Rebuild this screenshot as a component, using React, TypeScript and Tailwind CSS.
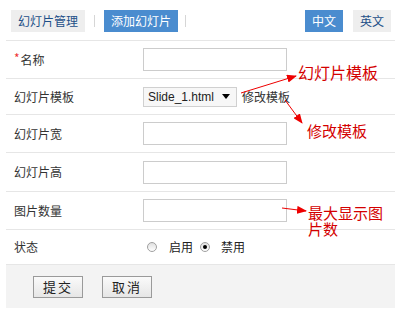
import React from "react";

const font = { fontFamily: '"Noto Sans CJK SC", "Liberation Sans", sans-serif' };

function Row({ h, label, children, star }: { h: string; label: string; children?: React.ReactNode; star?: boolean }) {
  return (
    <div className={`flex items-center border-b border-[#e6e6e6] ${h}`}>
      <div className="w-[137px] pl-[8px] text-[12px] text-[#333] flex items-center">
        {star && <span className="text-[#e33] text-[12px] mr-[1px] relative -top-[2px]">*</span>}
        {label}
      </div>
      <div className="flex items-center">{children}</div>
    </div>
  );
}

function Input() {
  return <div className="w-[144px] h-[23px] border border-[#cccccc] bg-white" />;
}

function Radio({ checked }: { checked?: boolean }) {
  return (
    <span className="w-[10px] h-[10px] rounded-full border border-[#a0a0a0] bg-gradient-to-b from-[#e0e0e0] to-white flex items-center justify-center">
      {checked && <span className="w-[4px] h-[4px] rounded-full bg-black" />}
    </span>
  );
}

export default function App() {
  return (
    <div className="w-[401px] h-[310px] bg-white relative overflow-hidden" style={font}>
      <div className="mx-[6px] w-[389px]">
        <div className="h-[41px] border-b border-[#e6e6e6] flex items-start pt-[10px] pl-[5px] pr-[4px]">
          <div className="w-[74px] h-[22px] bg-[#eeeeee] text-[#1d4f88] text-[12px] flex items-center justify-center">幻灯片管理</div>
          <div className="w-[19px] h-[22px] flex items-center justify-center"><span className="w-px h-[12px] bg-[#d6d6d6]" /></div>
          <div className="w-[74px] h-[22px] bg-[#4a8ccf] text-white text-[12px] flex items-center justify-center">添加幻灯片</div>
          <div className="w-[14px] h-[22px] flex items-center justify-center"><span className="w-px h-[12px] bg-[#d6d6d6]" /></div>
          <div className="flex-1" />
          <div className="w-[38px] h-[22px] bg-[#4a8ccf] text-white text-[12px] flex items-center justify-center">中文</div>
          <div className="w-[10px]" />
          <div className="w-[38px] h-[22px] bg-[#eeeeee] text-[#1d4f88] text-[12px] flex items-center justify-center">英文</div>
        </div>
        <Row h="h-[38px]" label="名称" star><Input /></Row>
        <Row h="h-[36px]" label="幻灯片模板">
          <div className="w-[94px] h-[20px] border border-[#d0d0d0] bg-[#f7f7f7] flex items-center pl-[4px] pr-[4px]">
            <span className="text-[12px] text-[#222] flex-1" style={{ fontFamily: '"Liberation Sans", Arial, sans-serif' }}>Slide_1.html</span>
            <svg width="8" height="5" viewBox="0 0 8 5" className="mr-[2px]"><path d="M0 0 L8 0 L4 5 Z" fill="#000" /></svg>
          </div>
          <span className="ml-[5px] text-[12px] text-[#333]">修改模板</span>
        </Row>
        <Row h="h-[38px]" label="幻灯片宽"><Input /></Row>
        <Row h="h-[39px]" label="幻灯片高"><Input /></Row>
        <Row h="h-[38px]" label="图片数量"><Input /></Row>
        <Row h="h-[35px]" label="状态">
          <div className="flex items-center text-[12px] text-[#222] pl-[4px]">
            <Radio />
            <span className="ml-[12px]">启用</span>
            <span className="ml-[7px]"><Radio checked /></span>
            <span className="ml-[11px]">禁用</span>
          </div>
        </Row>
        <div className="h-[43px] bg-[#f3f3f3] flex items-center pl-[27px] gap-[19px]">
          <button className="w-[50px] h-[22px] border border-[#9a9a9a] bg-gradient-to-b from-[#fafafa] to-[#e6e6e6] text-[13px] text-[#222] tracking-[2px] flex items-center justify-center">提交</button>
          <button className="w-[50px] h-[22px] border border-[#9a9a9a] bg-gradient-to-b from-[#fafafa] to-[#e6e6e6] text-[13px] text-[#222] tracking-[2px] flex items-center justify-center">取消</button>
        </div>
      </div>

      <svg className="absolute left-0 top-0 pointer-events-none" width="401" height="310">
        <defs>
          <marker id="ah" markerWidth="10" markerHeight="8" refX="9" refY="4" orient="auto" markerUnits="userSpaceOnUse">
            <path d="M0 0 L10 4 L0 8 Z" fill="#ee0000" />
          </marker>
        </defs>
        <line x1="241" y1="93" x2="296" y2="76" stroke="#ee0000" strokeWidth="1" markerEnd="url(#ah)" />
        <line x1="285" y1="100" x2="302" y2="123" stroke="#ee0000" strokeWidth="1" markerEnd="url(#ah)" />
        <line x1="282" y1="208" x2="306" y2="211" stroke="#ee0000" strokeWidth="1" markerEnd="url(#ah)" />
      </svg>
      <div className="absolute left-[298px] top-[62px] text-[16px] leading-[20px] text-[#d40000]">幻灯片模板</div>
      <div className="absolute left-[307px] top-[121px] text-[15px] leading-[20px] text-[#d40000]">修改模板</div>
      <div className="absolute left-[308px] top-[205px] w-[80px] text-[15px] leading-[16px] text-[#d40000]">最大显示图片数</div>
    </div>
  );
}
